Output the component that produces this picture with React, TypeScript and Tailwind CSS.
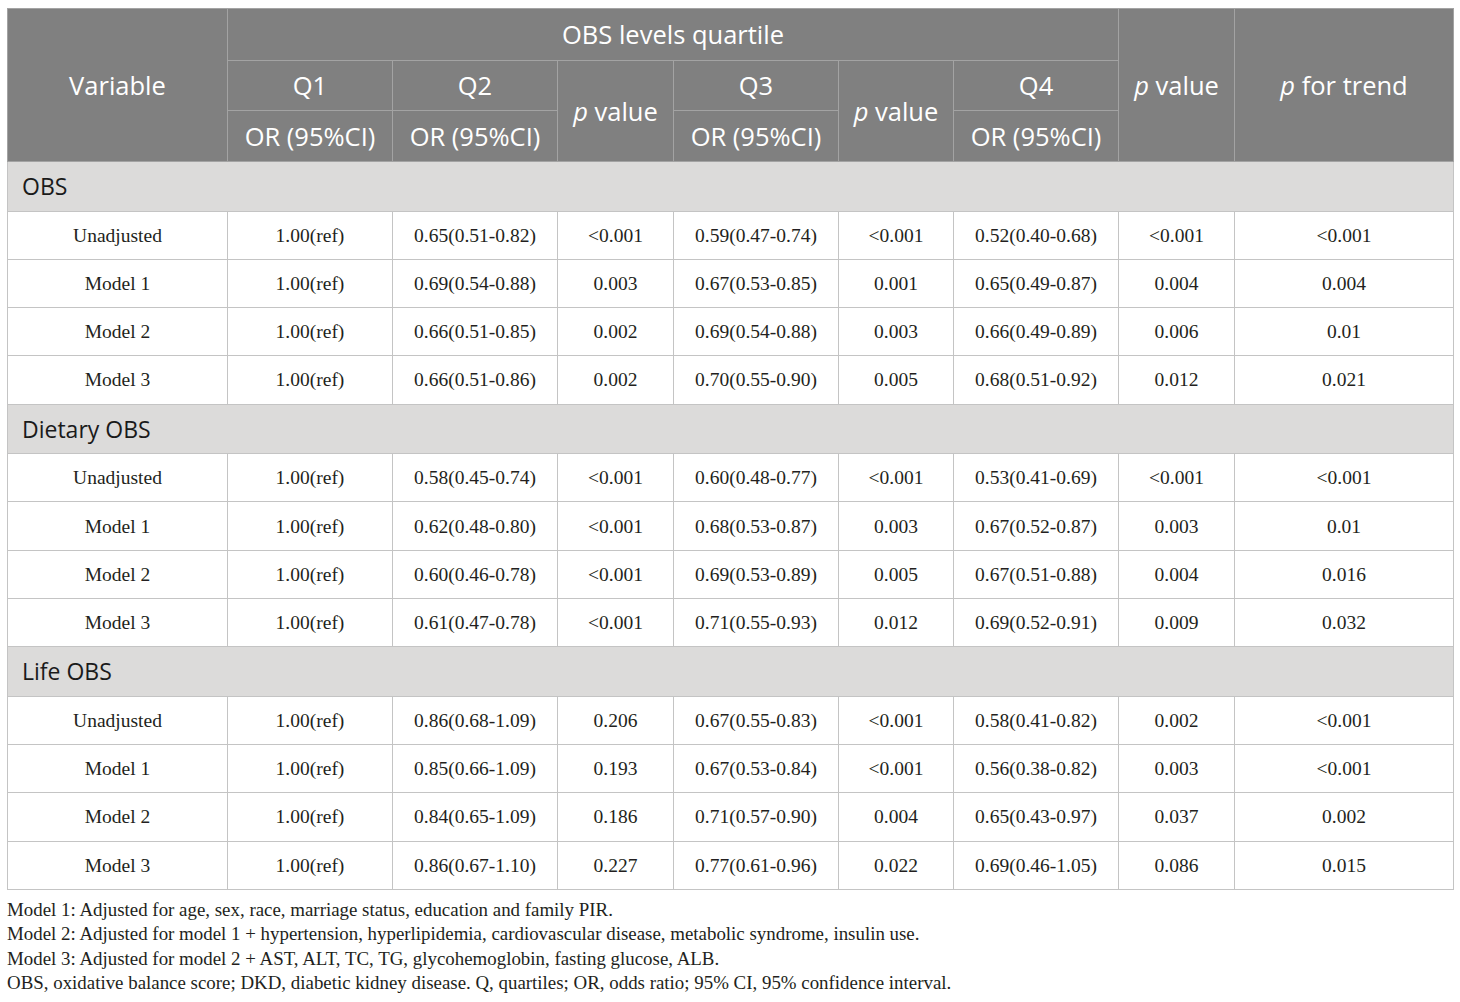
import React from "react";

type Row = [string, string, string, string, string, string, string, string];

const sections: { title: string; rows: Row[] }[] = [
  {
    title: "OBS",
    rows: [
      ["Unadjusted", "0.65(0.51-0.82)", "<0.001", "0.59(0.47-0.74)", "<0.001", "0.52(0.40-0.68)", "<0.001", "<0.001"],
      ["Model 1", "0.69(0.54-0.88)", "0.003", "0.67(0.53-0.85)", "0.001", "0.65(0.49-0.87)", "0.004", "0.004"],
      ["Model 2", "0.66(0.51-0.85)", "0.002", "0.69(0.54-0.88)", "0.003", "0.66(0.49-0.89)", "0.006", "0.01"],
      ["Model 3", "0.66(0.51-0.86)", "0.002", "0.70(0.55-0.90)", "0.005", "0.68(0.51-0.92)", "0.012", "0.021"],
    ],
  },
  {
    title: "Dietary OBS",
    rows: [
      ["Unadjusted", "0.58(0.45-0.74)", "<0.001", "0.60(0.48-0.77)", "<0.001", "0.53(0.41-0.69)", "<0.001", "<0.001"],
      ["Model 1", "0.62(0.48-0.80)", "<0.001", "0.68(0.53-0.87)", "0.003", "0.67(0.52-0.87)", "0.003", "0.01"],
      ["Model 2", "0.60(0.46-0.78)", "<0.001", "0.69(0.53-0.89)", "0.005", "0.67(0.51-0.88)", "0.004", "0.016"],
      ["Model 3", "0.61(0.47-0.78)", "<0.001", "0.71(0.55-0.93)", "0.012", "0.69(0.52-0.91)", "0.009", "0.032"],
    ],
  },
  {
    title: "Life OBS",
    rows: [
      ["Unadjusted", "0.86(0.68-1.09)", "0.206", "0.67(0.55-0.83)", "<0.001", "0.58(0.41-0.82)", "0.002", "<0.001"],
      ["Model 1", "0.85(0.66-1.09)", "0.193", "0.67(0.53-0.84)", "<0.001", "0.56(0.38-0.82)", "0.003", "<0.001"],
      ["Model 2", "0.84(0.65-1.09)", "0.186", "0.71(0.57-0.90)", "0.004", "0.65(0.43-0.97)", "0.037", "0.002"],
      ["Model 3", "0.86(0.67-1.10)", "0.227", "0.77(0.61-0.96)", "0.022", "0.69(0.46-1.05)", "0.086", "0.015"],
    ],
  },
];

const th = "border border-[#a3a3a3] font-normal text-white text-[25.5px] text-center align-middle p-0";
const td = "border border-[#c4c4c4] text-center align-middle text-[19.5px] text-[#231f20] p-0";

const PValue = ({ label }: { label: string }) => (
  <>
    <i>p</i> {label}
  </>
);

export default function App() {
  return (
    <div className="bg-white w-[1460px] h-[1002px] pt-[8px] pl-[7px]">
      <table className="table-fixed border-collapse w-[1446px]">
        <colgroup>
          <col className="w-[220px]" />
          <col className="w-[165px]" />
          <col className="w-[165px]" />
          <col className="w-[116px]" />
          <col className="w-[165px]" />
          <col className="w-[115px]" />
          <col className="w-[165px]" />
          <col className="w-[116px]" />
          <col className="w-[219px]" />
        </colgroup>
        <thead className="bg-[#808080] font-['Open_Sans',sans-serif]">
          <tr className="h-[52px]">
            <th rowSpan={3} className={th}>Variable</th>
            <th colSpan={6} className={th}>OBS levels quartile</th>
            <th rowSpan={3} className={th}><PValue label="value" /></th>
            <th rowSpan={3} className={th}><PValue label="for trend" /></th>
          </tr>
          <tr className="h-[50px]">
            <th className={th}>Q1</th>
            <th className={th}>Q2</th>
            <th rowSpan={2} className={th}><PValue label="value" /></th>
            <th className={th}>Q3</th>
            <th rowSpan={2} className={th}><PValue label="value" /></th>
            <th className={th}>Q4</th>
          </tr>
          <tr className="h-[51px]">
            <th className={th}>OR (95%CI)</th>
            <th className={th}>OR (95%CI)</th>
            <th className={th}>OR (95%CI)</th>
            <th className={th}>OR (95%CI)</th>
          </tr>
        </thead>
        <tbody className="font-['Liberation_Serif',serif]">
          {sections.map((s) => (
            <React.Fragment key={s.title}>
              <tr className="h-[49.5px] bg-[#dcdbda]">
                <td colSpan={9} className="border border-[#c4c4c4] pl-[14px] text-left text-[23px] text-[#1a1a1a] font-['Open_Sans',sans-serif]">
                  {s.title}
                </td>
              </tr>
              {s.rows.map((r) => (
                <tr key={r[0]} className="h-[48.3px]">
                  <td className={td}>{r[0]}</td>
                  <td className={td}>1.00(ref)</td>
                  {r.slice(1).map((c, i) => (
                    <td key={i} className={td}>{c}</td>
                  ))}
                </tr>
              ))}
            </React.Fragment>
          ))}
        </tbody>
      </table>
      <div className="mt-[8px] font-['Liberation_Serif',serif] text-[18.9px] leading-[24.4px] text-[#231f20]">
        <p>Model 1: Adjusted for age, sex, race, marriage status, education and family PIR.</p>
        <p>Model 2: Adjusted for model 1 + hypertension, hyperlipidemia, cardiovascular disease, metabolic syndrome, insulin use.</p>
        <p>Model 3: Adjusted for model 2 + AST, ALT, TC, TG, glycohemoglobin, fasting glucose, ALB.</p>
        <p>OBS, oxidative balance score; DKD, diabetic kidney disease. Q, quartiles; OR, odds ratio; 95% CI, 95% confidence interval.</p>
      </div>
    </div>
  );
}
